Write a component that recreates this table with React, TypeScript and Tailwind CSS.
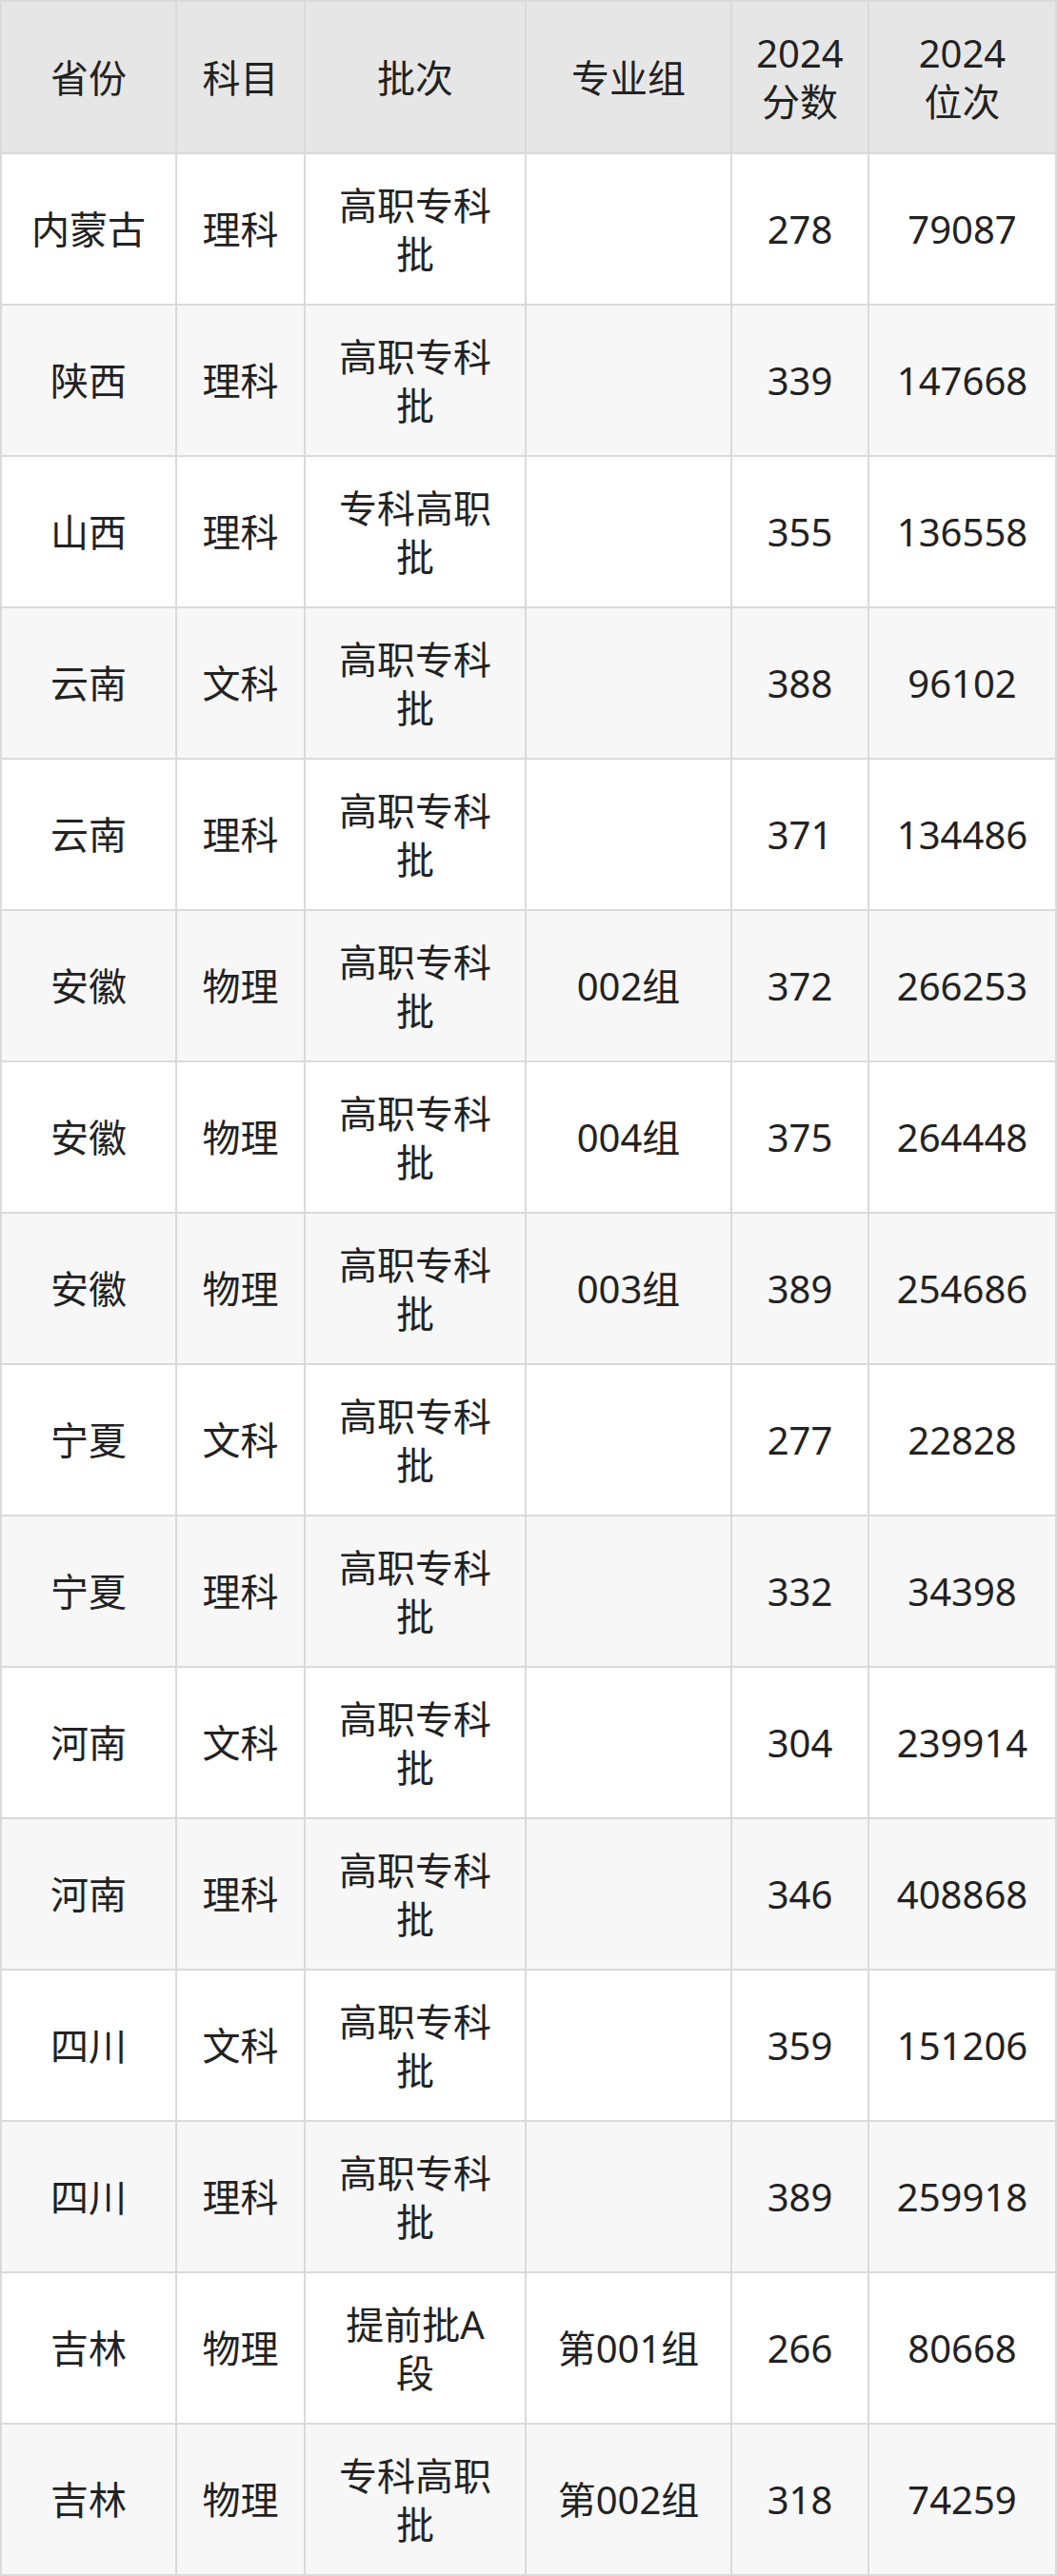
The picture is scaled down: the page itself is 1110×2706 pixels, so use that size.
import React from "react";

type Row = {
  province: string;
  subject: string;
  batch: string;
  group: string;
  score: string;
  rank: string;
};

const rows: Row[] = [
  { province: "内蒙古", subject: "理科", batch: "高职专科\n批", group: "", score: "278", rank: "79087" },
  { province: "陕西", subject: "理科", batch: "高职专科\n批", group: "", score: "339", rank: "147668" },
  { province: "山西", subject: "理科", batch: "专科高职\n批", group: "", score: "355", rank: "136558" },
  { province: "云南", subject: "文科", batch: "高职专科\n批", group: "", score: "388", rank: "96102" },
  { province: "云南", subject: "理科", batch: "高职专科\n批", group: "", score: "371", rank: "134486" },
  { province: "安徽", subject: "物理", batch: "高职专科\n批", group: "002组", score: "372", rank: "266253" },
  { province: "安徽", subject: "物理", batch: "高职专科\n批", group: "004组", score: "375", rank: "264448" },
  { province: "安徽", subject: "物理", batch: "高职专科\n批", group: "003组", score: "389", rank: "254686" },
  { province: "宁夏", subject: "文科", batch: "高职专科\n批", group: "", score: "277", rank: "22828" },
  { province: "宁夏", subject: "理科", batch: "高职专科\n批", group: "", score: "332", rank: "34398" },
  { province: "河南", subject: "文科", batch: "高职专科\n批", group: "", score: "304", rank: "239914" },
  { province: "河南", subject: "理科", batch: "高职专科\n批", group: "", score: "346", rank: "408868" },
  { province: "四川", subject: "文科", batch: "高职专科\n批", group: "", score: "359", rank: "151206" },
  { province: "四川", subject: "理科", batch: "高职专科\n批", group: "", score: "389", rank: "259918" },
  { province: "吉林", subject: "物理", batch: "提前批A\n段", group: "第001组", score: "266", rank: "80668" },
  { province: "吉林", subject: "物理", batch: "专科高职\n批", group: "第002组", score: "318", rank: "74259" },
];

const headers = ["省份", "科目", "批次", "专业组", "2024\n分数", "2024\n位次"];

const Cell: React.FC<{ text: string; bg: string; tall?: boolean }> = ({ text, bg, tall }) => (
  <div
    className={`${bg} ${tall ? "h-[158px]" : "h-[157px]"} flex items-center justify-center text-center whitespace-pre-line`}
  >
    {text}
  </div>
);

export default function App() {
  return (
    <div
      className="w-[1110px] text-[40px] leading-[51px] text-[#222222]"
      style={{ fontFamily: '"Noto Sans", "Noto Sans CJK SC", sans-serif' }}
    >
      <div className="grid grid-cols-[182px_133px_230px_214px_142px_195px] gap-[2px] p-[2px] bg-[#dadada]">
        {headers.map((h, i) => (
          <Cell key={"h" + i} text={h} bg="bg-[#e6e6e6]" tall />
        ))}
        {rows.map((r, idx) => {
          const bg = idx % 2 === 0 ? "bg-white" : "bg-[#f7f7f7]";
          return (
            <React.Fragment key={idx}>
              <Cell text={r.province} bg={bg} />
              <Cell text={r.subject} bg={bg} />
              <Cell text={r.batch} bg={bg} />
              <Cell text={r.group} bg={bg} />
              <Cell text={r.score} bg={bg} />
              <Cell text={r.rank} bg={bg} />
            </React.Fragment>
          );
        })}
      </div>
    </div>
  );
}
